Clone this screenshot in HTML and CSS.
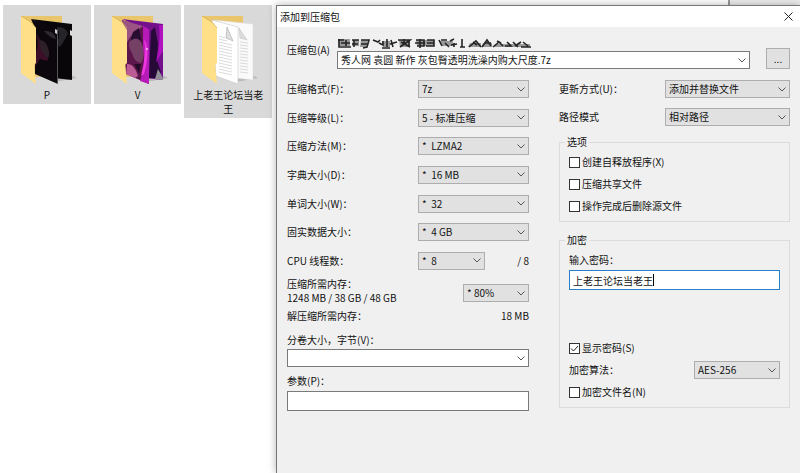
FILE: index.html
```html
<!DOCTYPE html>
<html lang="zh-CN">
<head>
    <meta charset="UTF-8">
    <meta name="viewport" content="width=device-width, initial-scale=1.0">
    <title>添加到压缩包</title>
    <link rel="stylesheet" href="styles.css">
</head>
<body>
    <div class="desktop">
        <div class="back-window"></div>
        <div class="files">
            <div class="file">
                <svg class="folder" viewBox="0 0 56 70" width="56" height="70">
                    <path d="M2 1H43V60L16 62Z" fill="#e9c56c"/>
                    <path d="M38 63L54 61L58 63L36 67Z" fill="#b9b9b9"/>
                    <path d="M12 4L53 9V65L35 63V14Z" fill="#080609"/>
                    <path d="M38 12Q46 11 49 18Q45 27 41 32L36 27Q43 24 38 12Z" fill="#242429"/>
                    <path d="M51 15L53 16V21L51 20Z" fill="#ddd"/>
                    <path d="M12 4L39 14V69L16 59V13Z" fill="#0b070c"/>
                    <path d="M17 19Q22 23 21 31L26 37Q31 43 28 46L21 44L16 52V38Q21 32 17 19Z" fill="#3c0e28"/>
                    <path d="M20 25Q27 24 30 36Q31 45 27 42Q20 35 20 25Z" fill="#2d2029"/>
                    <path d="M25 16Q35 15 37 24Q31 23 25 16Z" fill="#2c2930"/>
                    <path d="M36 14L38 15V19L36 18Z" fill="#ccc"/>
                    <path d="M38.500 14V69" stroke="#777" stroke-width=".7"/>
                    <path d="M2 1L12 7L17 13V48L15 50L17 69L2 58Z" fill="#ffdf87"/>
                    <path d="M2 1L12 7L17 13" fill="none" stroke="#d1a84e" stroke-width=".7"/>
                </svg>
                <span>P</span>
            </div>
            <div class="file">
                <svg class="folder" viewBox="0 0 56 70" width="56" height="70">
                    <path d="M2 1H43V60L16 62Z" fill="#e9c56c"/>
                    <path d="M38 63L54 61L58 63L36 67Z" fill="#b9b9b9"/>
                    <path d="M12 4L53 9V65L35 63V14Z" fill="#74108b"/>
                    <path d="M41 16L45 12L48 29L47 46L51 57L48 63L39 63Z" fill="#260936"/>
                    <path d="M49 10L53 10V36L46 47Q51 25 49 10Z" fill="#b010c0"/>
                    <path d="M48 54L53 63V65L45 64Z" fill="#929096"/>
                    <path d="M12 5L39 14V69L16 59Z" fill="#5d164c"/>
                    <path d="M12 5L33 11L25 18Q20 20 16 30Z" fill="#9a5382"/>
                    <path d="M22 20Q29 19 32 29Q36 41 31 48Q24 47 22 38Q16 30 22 20Z" fill="#754066"/>
                    <path d="M33 11L39 14V69L30 66Q36 50 33 32Z" fill="#b71bb7"/>
                    <path d="M34 24Q41 34 34 59L31 61Q37 37 34 24Z" fill="#ee38df"/>
                    <path d="M17 49Q24 48 28 61L25 63L16 59Z" fill="#bb5c96"/>
                    <path d="M23 17L29 13L32 28Q27 20 20 26Z" fill="#290c31"/>
                    <path d="M24 49L31 49L29 58Z" fill="#250b29"/>
                    <circle cx="37" cy="34" r="1" fill="#f5c7f1"/>
                    <path d="M2 1L12 7L17 15V48L15 50L17 69L2 58Z" fill="#ffdf87"/>
                    <path d="M2 1L12 7L17 13" fill="none" stroke="#d1a84e" stroke-width=".7"/>
                </svg>
                <span>V</span>
            </div>
            <div class="file">
                <svg class="folder" viewBox="0 0 56 70" width="56" height="70">
                    <path d="M2 1H43V60L16 62Z" fill="#e9c56c"/>
                    <path d="M38 63L54 61L58 63L36 67Z" fill="#b9b9b9"/>
                    <path d="M14 5L53 9V65L35 63V14Z" fill="#fafafa" stroke="#d8d8d8" stroke-width=".5"/>
                    <path d="M39 13L47 25L40 23Z" fill="#ddd" stroke="#bbb" stroke-width=".5"/>
                    <path d="M40 27L48 28M40 30L48 31M40 33L48 34M40 36L48 37M40 39L48 40M40 42L48 43M40 45L48 46M40 48L48 49M40 51L48 52M40 54L48 55M40 57L48 58" stroke="#d2d2d2" stroke-width=".8"/>
                    <path d="M12 5L38 12V69L16 61Z" fill="#fff" stroke="#c9c9c9" stroke-width=".6"/>
                    <path d="M27 12L33 26L26 23Z" fill="#dedede" stroke="#aaa" stroke-width=".6"/>
                    <path d="M19 21L25 23M19 24L27 26M19 27L32 30M19 30L32 33M19 33L32 36M19 36L32 39M19 39L32 42M19 42L32 45M19 45L32 48M19 48L32 51M19 51L32 54M19 54L32 57M19 57L32 60" stroke="#d0d0d0" stroke-width=".8"/>
                    <path d="M2 1L12 7L17 13V48L15 50L17 69L2 58Z" fill="#ffdf87"/>
                    <path d="M2 1L12 7L17 13" fill="none" stroke="#d1a84e" stroke-width=".7"/>
                </svg>
                <span>上老王论坛当老王</span>
            </div>
        </div>

        <form class="dialog">
            <div class="titlebar">
                <span>添加到压缩包</span>
                <button type="button" class="close" aria-label="关闭">
                    <svg viewBox="0 0 9 9" width="9" height="9"><path d="M.5 .5L8.500 8.500M8.500 .5L.5 8.500" stroke="#222" stroke-width="1"/></svg>
                </button>
            </div>

            <div class="archive">
                <label for="archive">压缩包(A)</label>
                <div class="path">
                    <svg class="scribble" viewBox="0 0 195 11" width="195" height="11">
                        <path d="M1 1H13V8H2ZM16 2H22V8H15ZM24 2H31L29 9H23ZM45 3H53V9H46ZM62 2H73V9H63ZM79 2H97V8H80ZM103 3H116V8H105ZM133 5H144V9H131ZM146 5H155V9H145ZM158 6H193V9H157Z" fill="#999"/>
                        <path d="M1 2H7M2 1V9H14M4 5H13M9 2V8M15 2H22M17 2V9M15 6H21M24 2H32L30 9L26 10M24 6H31M36 2L41 4L43 2M42 5L46 7V3M45 10H53M50 1V9M54 2L56 9M53 6L60 4M61 2H73L63 9M64 4L73 9M67 1V7M72 2V9M79 2H87V8H80M78 5H88M83 1V10M90 2H97V8H89M90 5H97M102 2L105 8M104 2H110M108 5L112 9M113 3L117 1M117 5V9M114 7L120 6M125 1V9M123 9H128M132 9L139 3L144 9M136 4L140 7M145 9L150 2L154 8M147 5H154M156 9L162 4L166 8M160 3L164 5M168 8H174L170 4M176 4L181 9M178 8L184 4M184 9H194M186 4L191 8" fill="none" stroke="#242424" stroke-width="1.600"/>
                    </svg>
                    <select id="archive" class="field"><option>秀人网 袁圆 新作 灰包臀透明洗澡内购大尺度.7z</option></select>
                </div>
                <button type="button" class="browse" aria-label="浏览">...</button>
            </div>

            <div class="columns">
                <div class="left">
                    <div class="settings">
                        <div class="row"><label for="format">压缩格式(F)：</label><select id="format"><option>7z</option></select></div>
                        <div class="row"><label for="level">压缩等级(L)：</label><select id="level"><option>5 - 标准压缩</option></select></div>
                        <div class="row"><label for="method">压缩方法(M)：</label><select id="method"><option>*&nbsp; LZMA2</option></select></div>
                        <div class="row"><label for="dict">字典大小(D)：</label><select id="dict"><option>*&nbsp; 16 MB</option></select></div>
                        <div class="row"><label for="word">单词大小(W)：</label><select id="word"><option>*&nbsp; 32</option></select></div>
                        <div class="row"><label for="solid">固实数据大小：</label><select id="solid"><option>*&nbsp; 4 GB</option></select></div>
                        <div class="row">
                            <label for="threads">CPU 线程数：</label>
                            <div class="threads"><select id="threads"><option>*&nbsp; 8</option></select><span>/ 8</span></div>
                        </div>
                    </div>
                    <div class="memory">
                        <label for="memory">压缩所需内存：<br>1248 MB / 38 GB / 48 GB</label>
                        <select id="memory"><option>* 80%</option></select>
                    </div>
                    <div class="unpack"><span>解压缩所需内存：</span><span>18 MB</span></div>
                    <label for="volume">分卷大小，字节(V)：</label>
                    <select id="volume" class="field"><option></option></select>
                    <label for="params" class="params-label">参数(P)：</label>
                    <input type="text" id="params">
                </div>

                <div class="right">
                    <div class="modes">
                        <div class="row"><label for="update">更新方式(U)：</label><select id="update"><option>添加并替换文件</option></select></div>
                        <div class="row"><label for="pathmode">路径模式</label><select id="pathmode"><option>相对路径</option></select></div>
                    </div>
                    <fieldset class="options">
                        <legend>选项</legend>
                        <label class="check"><input type="checkbox">创建自释放程序(X)</label>
                        <label class="check"><input type="checkbox">压缩共享文件</label>
                        <label class="check"><input type="checkbox">操作完成后删除源文件</label>
                    </fieldset>
                    <fieldset class="crypt">
                        <legend>加密</legend>
                        <label for="password">输入密码：</label>
                        <div class="password">
                            <input type="text" id="password" value="上老王论坛当老王">
                            <i class="caret"></i>
                        </div>
                        <label class="check"><input type="checkbox" checked>显示密码(S)</label>
                        <div class="algo"><label for="algo">加密算法：</label><select id="algo"><option>AES-256</option></select></div>
                        <label class="check"><input type="checkbox">加密文件名(N)</label>
                    </fieldset>
                </div>
            </div>
        </form>
    </div>
</body>
</html>
```

FILE: styles.css
```css
*{margin: 0;padding: 0;box-sizing: border-box;}
body{
    background: #fff;
    color: #111;
    font: 10px/14px "Noto Sans CJK SC", sans-serif;
}
select,input,button{
    font: inherit;
    color: inherit;
    border-radius: 0;
}
label,legend,span{white-space: nowrap;}
.desktop{
    position: relative;
    display: flex;
    min-height: 100vh;
    padding-top: 5px;
}
/* 后面的窗口只露出上边一条 */
.back-window{
    position: absolute;
    top: 0;
    right: 0;
    width: 9%;
    height: 5px;
    border-left: 2px solid #999;
    background: #ededed;
}
.files{
    display: flex;
    align-items: flex-start;
    flex: 0 0 276px;
    gap: 3px;
    padding: 0 4px 0 3px;
}
.file{
    display: flex;
    flex-direction: column;
    align-items: center;
    flex: 1;
    padding: 10px 8px 2px;
    background: #d9d9d9;
    text-align: center;
}
.file span{white-space: normal;}
.folder{
    margin-bottom: 3px;
    overflow: visible;
}
.dialog{
    flex: 1;
    min-width: 0;
    border-top: 1px solid #777;
    border-left: 1px solid #777;
    background: #f0f0f0;
    box-shadow: 0 0 8px rgba(0,0,0,.3);
    z-index: 1;
}
.titlebar{
    display: flex;
    justify-content: space-between;
    align-items: center;
    height: 21px;
    padding: 0 7px 0 3px;
    background: #fff;
}
.close{
    display: flex;
    border: 0;
    background: none;
}
.archive{
    display: flex;
    align-items: flex-end;
    padding: 11px 10px 0;
}
.archive label{
    width: 50px;
    padding-bottom: 12px;
}
.path{
    flex: 1;
    min-width: 0;
}
.scribble{display: block;margin-bottom: 2px;}
.path select{width: 100%;}
select{
    appearance: none;
    height: 18px;
    padding: 0 16px 0 3px;
    border: 1px solid #adadad;
    background: #e1e1e1 url("data:image/svg+xml,%3Csvg xmlns='http://www.w3.org/2000/svg' width='8' height='5'%3E%3Cpath d='M.5 .5L4 4L7.5 .5' fill='none' stroke='%23555'/%3E%3C/svg%3E") no-repeat right 3px center;
}
select.field{
    background-color: #fff;
    border-color: #7a7a7a;
}
.browse{
    width: 24px;
    height: 21px;
    margin-left: 16px;
    border: 1px solid #adadad;
    background: #e1e1e1;
}
.columns{
    display: grid;
    grid-template-columns: 242fr 231fr;
    gap: 30px;
    padding: 11px 10px 20px;
}
.left{
    display: flex;
    flex-direction: column;
}
.settings{
    display: flex;
    flex-direction: column;
    justify-content: space-between;
    height: 190px;
    margin-bottom: 7px;
}
.row{
    display: grid;
    grid-template-columns: 131fr 111fr;
    align-items: center;
}
.threads{
    display: flex;
    justify-content: space-between;
    align-items: center;
}
.threads select{width: 67px;}
.memory{
    display: flex;
    justify-content: space-between;
    align-items: flex-end;
    margin-bottom: 4px;
}
.memory select{
    width: 66px;
    margin-bottom: 3px;
}
.unpack{
    display: flex;
    justify-content: space-between;
    margin-bottom: 10px;
}
#volume{margin-top: 2px;}
.params-label{margin: 7px 0 3px;}
input[type=text]{
    width: 100%;
    height: 20px;
    padding: 0 3px;
    border: 1px solid #7a7a7a;
    background: #fff;
}
.modes{
    display: grid;
    gap: 10px;
    margin-bottom: 9px;
}
.right .row{grid-template-columns: 106fr 125fr;}
fieldset{
    min-width: 0;
    padding: 6px 9px 8px;
    border: 1px solid #dcdcdc;
}
legend{
    margin-left: -4px;
    padding: 0 2px;
}
.check{
    display: flex;
    align-items: center;
    gap: 2px;
}
.check + .check{margin-top: 8px;}
input[type=checkbox]{
    appearance: none;
    width: 11px;
    height: 11px;
    border: 1px solid #333;
    background: #fff;
}
input[type=checkbox]:checked{
    background: #fff url("data:image/svg+xml,%3Csvg xmlns='http://www.w3.org/2000/svg' width='9' height='9'%3E%3Cpath d='M1 4.5L3.5 7L8 2' fill='none' stroke='%23222'/%3E%3C/svg%3E") no-repeat center;
}
.options{margin-bottom: 11px;}
.password{
    position: relative;
    margin: 3px 0 51px;
}
.password input[type=text]{border-color: #2a7fcb;}
.caret{
    position: absolute;
    top: 4px;
    left: 84px;
    width: 1px;
    height: 12px;
    background: #000;
}
.algo{
    display: flex;
    justify-content: space-between;
    align-items: center;
    margin: 6px 0;
}
.algo select{width: 86px;}
```
